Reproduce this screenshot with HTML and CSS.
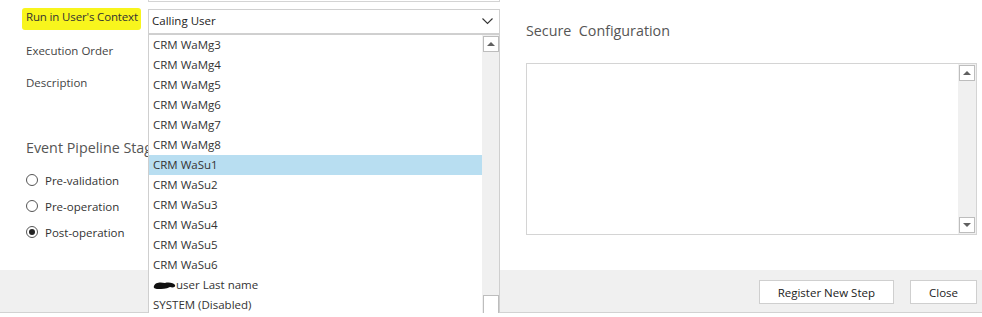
FILE: index.html
```html
<!DOCTYPE html>
<html lang="en">
<head>
  <meta charset="UTF-8">
  <title>Register New Step</title>
  <link rel="stylesheet" href="styles.css">
</head>
<body>

  <div class="main">

    <!-- Left form column -->
    <div class="left">
      <div class="row cut">
        <span></span>
        <div class="input cut-input"></div>
      </div>

      <div class="row ctx">
        <label class="hl">Run in User's Context</label>
        <div class="select">
          <span>Calling User</span>
          <svg class="chev" width="11" height="7" viewBox="0 0 11 7"><polyline points="0.5,0.5 5.5,5.5 10.5,0.5" fill="none" stroke="#333" stroke-width="1.1"/></svg>
        </div>
      </div>

      <div class="row">
        <label>Execution Order</label>
        <div class="input"></div>
      </div>

      <div class="row desc">
        <label>Description</label>
        <div class="input tall"></div>
      </div>

      <h2 class="section clipped">Event Pipeline Stage of Execution</h2>

      <div class="radios">
        <div class="radio"><span class="dot"></span>Pre-validation</div>
        <div class="radio"><span class="dot"></span>Pre-operation</div>
        <div class="radio"><span class="dot checked"></span>Post-operation</div>
      </div>

      <!-- open dropdown list -->
      <div class="dropdown">
        <div class="options">
          <div class="opt">CRM WaMg3</div>
          <div class="opt">CRM WaMg4</div>
          <div class="opt">CRM WaMg5</div>
          <div class="opt">CRM WaMg6</div>
          <div class="opt">CRM WaMg7</div>
          <div class="opt">CRM WaMg8</div>
          <div class="opt selected">CRM WaSu1</div>
          <div class="opt">CRM WaSu2</div>
          <div class="opt">CRM WaSu3</div>
          <div class="opt">CRM WaSu4</div>
          <div class="opt">CRM WaSu5</div>
          <div class="opt">CRM WaSu6</div>
          <div class="opt"><svg class="blot" width="23" height="9" viewBox="0 0 23 9"><path d="M1 5 C2 1 8 1 12 2 C16 1 21 2 22 4 C23 6 20 7 17 6 C13 8 9 8 5 8 C2 8 0 7 1 5 Z" fill="#111"/></svg>user Last name</div>
          <div class="opt">SYSTEM (Disabled)</div>
        </div>
        <div class="scrollbar">
          <div class="sbtn"><span class="tri up"></span></div>
          <div class="thumb"></div>
        </div>
      </div>
    </div>

    <!-- Right column -->
    <div class="right">
      <h2 class="section">Secure&nbsp; Configuration</h2>
      <div class="textbox">
        <div class="scrollbar">
          <div class="sbtn"><span class="tri up"></span></div>
          <div class="sbtn"><span class="tri down"></span></div>
        </div>
      </div>
    </div>

  </div>

  <div class="footer">
    <button>Register New Step</button>
    <button>Close</button>
  </div>

</body>
</html>
```

FILE: styles.css
```css
body {
  margin: 0;
  font-family: "Open Sans", "Segoe UI", sans-serif;
  font-size: 11.5px;
  color: #444;
  background: #fff;
}
.main {
  display: flex;
  height: 270px;
}
.left {
  position: relative;
  width: 500px;
  padding-left: 26px;
  box-sizing: border-box;
}
.row {
  display: grid;
  grid-template-columns: 122px 352px;
  margin-top: 5px;
  height: 24px;
}
.row label {
  line-height: 24px;
}
.input {
  border: 1px solid #d4d4d4;
  box-sizing: border-box;
  height: 24px;
}
.row.cut {
  margin-top: 0;
  height: 2px;
}
.cut-input {
  height: 2px;
  border-top: none;
}
.row.ctx {
  margin-top: 7px;
  height: 25px;
}
.row.desc {
  margin-top: 8px;
  height: 48px;
}
.input.tall {
  height: 48px;
}
.hl {
  align-self: start;
  justify-self: start;
  margin: -1px 0 0 -4px;
  padding: 1px 3px 5px 4px;
  line-height: 16px !important;
  background: #f8f51d;
  border-radius: 3px;
  color: #333;
  letter-spacing: -0.15px;
}
.select {
  display: flex;
  align-items: center;
  justify-content: space-between;
  height: 25px;
  box-sizing: border-box;
  border: 1px solid #d0d0d0;
  padding: 0 6px 2px 3px;
  color: #222;
}
.chev {
  margin-top: 2px;
}
.section {
  margin: 19px 0 0;
  font-size: 14.3px;
  font-weight: 400;
  line-height: 20px;
  color: #555;
  white-space: nowrap;
}
/* the open list hides the rest of this heading */
.section.clipped {
  width: 122px;
  overflow: hidden;
}
.radios {
  margin-top: 9px;
}
.radio {
  display: flex;
  align-items: center;
  height: 26px;
  color: #333;
}
.dot {
  width: 12px;
  height: 12px;
  box-sizing: border-box;
  border: 1px solid #555;
  border-radius: 50%;
  margin-right: 7px;
  display: flex;
  align-items: center;
  justify-content: center;
}
.dot.checked::after {
  content: "";
  width: 6px;
  height: 6px;
  border-radius: 50%;
  background: #222;
}

/* dropdown list, open over the form */
.dropdown {
  position: absolute;
  left: 148px;
  top: 34px;
  width: 352px;
  box-sizing: border-box;
  display: flex;
  background: #fff;
  border: 1px solid #cfcfcf;
  z-index: 10;
}
.options {
  flex: 1;
}
.opt {
  height: 20px;
  line-height: 20px;
  padding-left: 4px;
  color: #333;
  white-space: nowrap;
}
.opt.selected {
  background: #b8def1;
}
.blot {
  vertical-align: -1px;
}
.scrollbar {
  width: 17px;
  background: #f0f0f0;
  display: flex;
  flex-direction: column;
  justify-content: space-between;
  align-items: center;
}
.sbtn {
  width: 16px;
  height: 16px;
  margin: 1px 0;
  box-sizing: border-box;
  border: 1px solid #bdbdbd;
  background: #fff;
  display: flex;
  align-items: center;
  justify-content: center;
}
.thumb {
  width: 16px;
  height: 19px;
  margin-bottom: 1px;
  box-sizing: border-box;
  border: 1px solid #bdbdbd;
  background: #fff;
}
.tri {
  width: 0;
  height: 0;
  border-left: 4px solid transparent;
  border-right: 4px solid transparent;
}
.tri.up {
  border-bottom: 4px solid #606060;
}
.tri.down {
  border-top: 4px solid #606060;
}

/* right column */
.right {
  width: 451px;
  margin-left: 26px;
}
.right .section {
  margin-top: 21px;
}
.textbox {
  margin-top: 22px;
  height: 172px;
  box-sizing: border-box;
  border: 1px solid #d4d4d4;
  display: flex;
  justify-content: flex-end;
}
.textbox .scrollbar {
  width: 18px;
}

.footer {
  display: flex;
  justify-content: flex-end;
  gap: 16px;
  height: 43px;
  padding: 10px 5px 0 0;
  box-sizing: border-box;
  background: #f0f0f0;
  border-bottom: 1px solid #d2d2d2;
}
.footer button {
  height: 24px;
  padding: 0 18px;
  font-family: inherit;
  font-size: 11.5px;
  color: #222;
  background: #fff;
  border: 1px solid #cfcfcf;
}
```
